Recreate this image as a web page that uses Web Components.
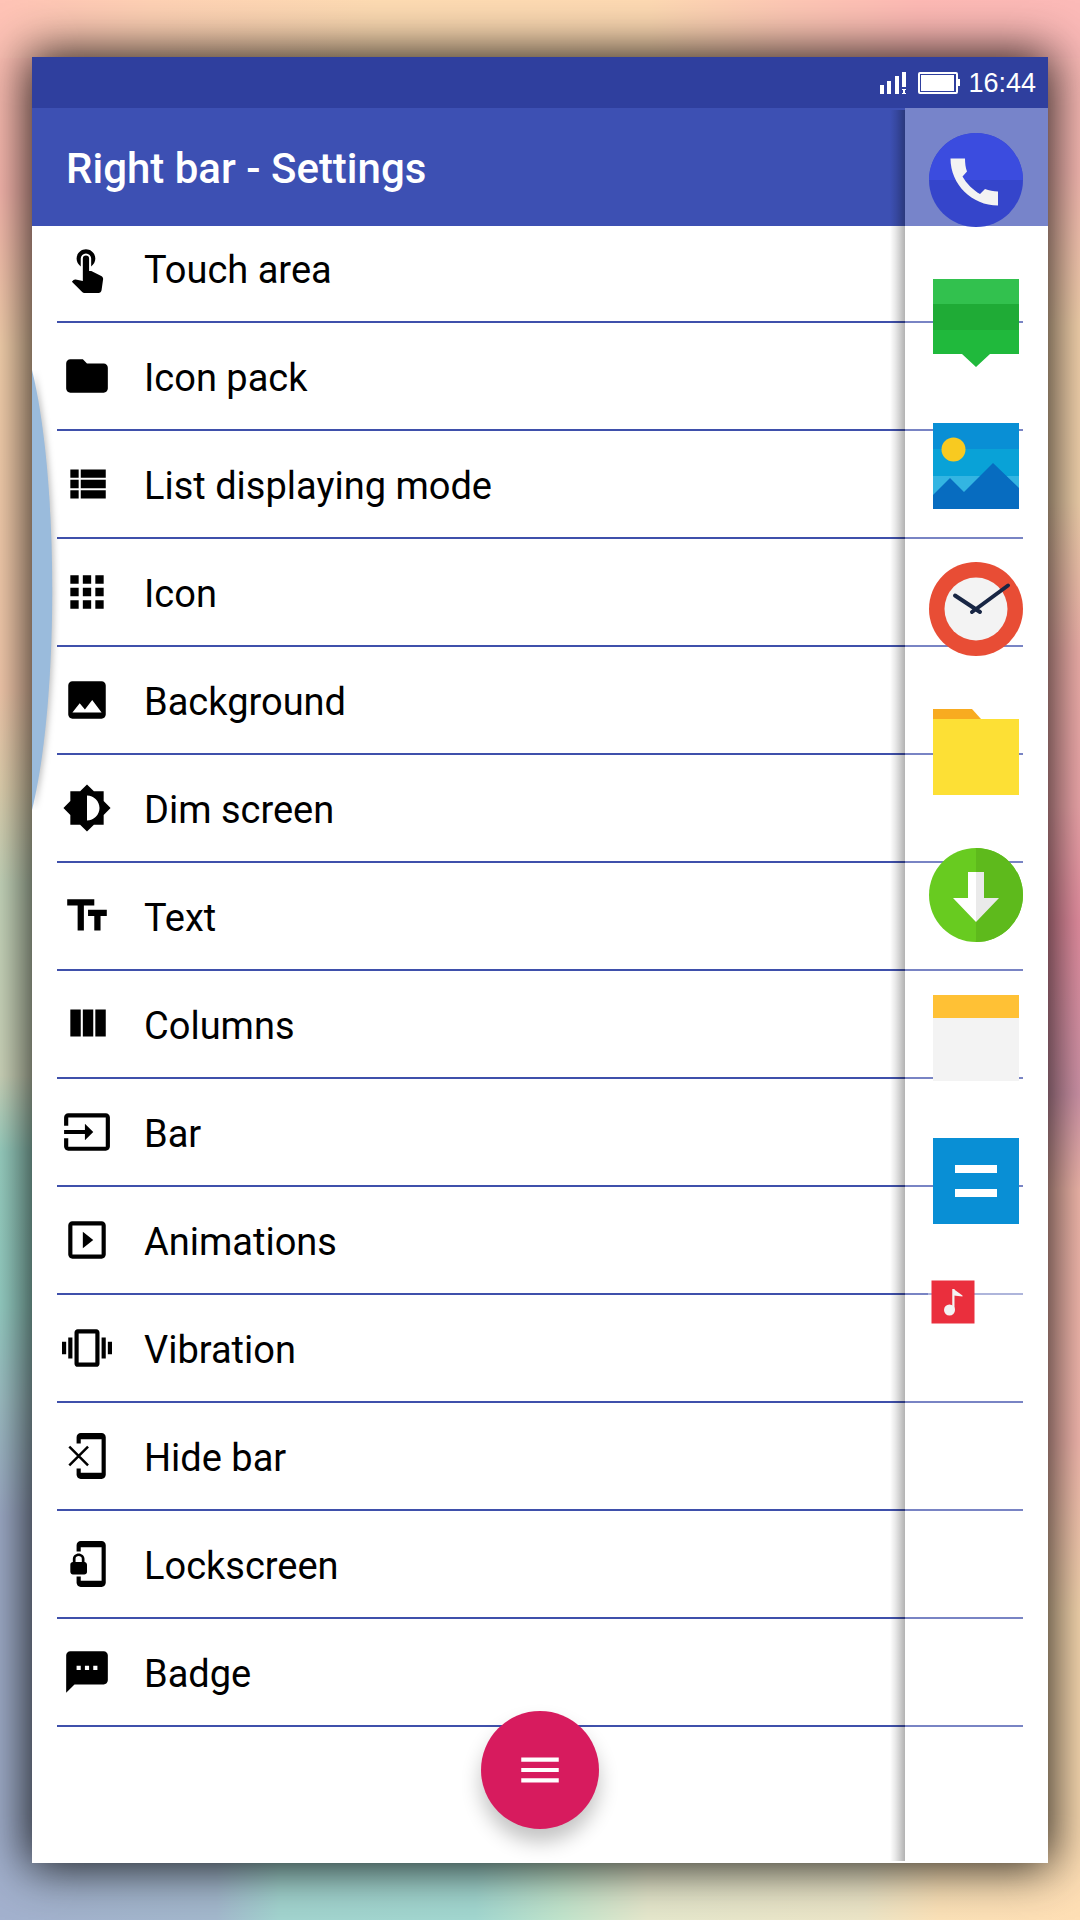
<!DOCTYPE html>
<html lang="en">
<head>
<meta charset="utf-8">
<title>Right bar - Settings</title>
<meta name="viewport" content="width=device-width, initial-scale=1">
<style>
  html, body { margin: 0; min-height: 100%; }
  body { font-family: Roboto, "Liberation Sans", sans-serif; color: #000; }
</style>
</head>
<body>
<app-backdrop>
  <app-screen>
    <status-bar slot="status">16:44</status-bar>
    <title-bar slot="title">Right bar - Settings</title-bar>
    <settings-list slot="list">
      <settings-row icon="touch">Touch area</settings-row>
      <settings-row icon="folder">Icon pack</settings-row>
      <settings-row icon="list">List displaying mode</settings-row>
      <settings-row icon="grid">Icon</settings-row>
      <settings-row icon="image">Background</settings-row>
      <settings-row icon="dim">Dim screen</settings-row>
      <settings-row icon="text">Text</settings-row>
      <settings-row icon="columns">Columns</settings-row>
      <settings-row icon="input">Bar</settings-row>
      <settings-row icon="play">Animations</settings-row>
      <settings-row icon="vibration">Vibration</settings-row>
      <settings-row icon="hide">Hide bar</settings-row>
      <settings-row icon="lock">Lockscreen</settings-row>
      <settings-row icon="badge">Badge</settings-row>
    </settings-list>
    <touch-handle slot="over"></touch-handle>
    <side-bar slot="over">
      <side-app app="phone" label="Phone"></side-app>
      <side-app app="messages" label="Messages"></side-app>
      <side-app app="gallery" label="Gallery"></side-app>
      <side-app app="clock" label="Clock"></side-app>
      <side-app app="files" label="Files"></side-app>
      <side-app app="downloads" label="Downloads"></side-app>
      <side-app app="notes" label="Notes"></side-app>
      <side-app app="calculator" label="Calculator"></side-app>
      <side-app app="music" label="Music" entering></side-app>
    </side-bar>
    <menu-fab slot="over"></menu-fab>
  </app-screen>
</app-backdrop>

<script>
const define = (name, html) => {
  customElements.define(name, class extends HTMLElement {
    constructor() {
      super();
      this.attachShadow({ mode: 'open' });
    }
    connectedCallback() {
      this.shadowRoot.innerHTML = typeof html === 'function' ? html(this) : html;
    }
  });
};

const glyphs = {
  touch: '<path d="M9 11.24V7.5a2.5 2.5 0 0 1 5 0v3.74c1.21-.81 2-2.18 2-3.74C16 5.01 13.99 3 11.5 3S7 5.01 7 7.5c0 1.56.79 2.93 2 3.74zm9.84 4.63-4.54-2.26c-.17-.07-.35-.11-.54-.11H13v-6a1.5 1.5 0 0 0-3 0v10.74l-3.43-.72c-.08-.01-.15-.03-.24-.03-.31 0-.59.13-.79.33l-.79.8 4.94 4.94c.27.27.65.44 1.06.44h6.79c.75 0 1.33-.55 1.44-1.28l.75-5.27c.01-.07.02-.14.02-.2 0-.62-.38-1.16-.91-1.38z"/>',
  folder: '<path d="M10 4H4c-1.1 0-2 .9-2 2v12c0 1.1.9 2 2 2h16c1.1 0 2-.9 2-2V8c0-1.1-.9-2-2-2h-8z"/>',
  list: '<path d="M4 14h4v-4H4zm0 5h4v-4H4zM4 9h4V5H4zm5 5h12v-4H9zm0 5h12v-4H9zM9 5v4h12V5z"/>',
  grid: '<path d="M4 8h4V4H4zm6 12h4v-4h-4zm-6 0h4v-4H4zm0-6h4v-4H4zm6 0h4v-4h-4zm6-10v4h4V4zm-6 4h4V4h-4zm6 6h4v-4h-4zm0 6h4v-4h-4z"/>',
  image: '<path d="M21 19V5c0-1.100-.9-2-2-2H5c-1.100 0-2 .9-2 2v14c0 1.100.9 2 2 2h14c1.100 0 2-.9 2-2zM8.500 13.500l2.500 3.010L14.500 12l4.500 6H5z"/>',
  dim: '<path d="M20 15.31 23.310 12 20 8.690V4h-4.690L12 .69 8.690 4H4v4.690L.69 12 4 15.310V20h4.690L12 23.310 15.310 20H20zM12 18V6c3.310 0 6 2.690 6 6s-2.690 6-6 6z"/>',
  text: '<path d="M2.500 4v3h5v12h3V7h5V4zm19 5h-9v3h3v7h3v-7h3z"/>',
  columns: '<path d="M10 18h5V5h-5zm-6 0h5V5H4zM16 5v13h5V5z"/>',
  input: '<path d="M21 3.010H3c-1.100 0-2 .9-2 2V9h2V4.990h18v14.030H3V15H1v4.010c0 1.100.9 1.980 2 1.980h18c1.100 0 2-.88 2-1.980v-14c0-1.110-.9-2-2-2zM11 16l4-4-4-4v3H1v2h10z"/>',
  play: '<path d="M10 8v8l5-4zm9-5H5c-1.100 0-2 .9-2 2v14c0 1.100.9 2 2 2h14c1.100 0 2-.9 2-2V5c0-1.100-.9-2-2-2zm0 16H5V5h14z"/>',
  vibration: '<path d="M0 15h2V9H0zm3 2h2V7H3zm19-8v6h2V9zm-3 8h2V7h-2zM16.500 3h-9C6.670 3 6 3.670 6 4.500v15c0 .83.67 1.500 1.500 1.500h9c.83 0 1.500-.67 1.500-1.500v-15c0-.83-.67-1.500-1.500-1.500zM16 19H8V5h8z"/>',
  hide: '<path d="M19 1H9C7.900 1 7 1.900 7 3v3h2V4h10v16H9v-2H7v3c0 1.100.9 2 2 2h10c1.100 0 2-.9 2-2V3c0-1.100-.9-2-2-2z"/><path d="M3.500 7.500l9 9m0-9l-9 9" fill="none" stroke="#000" stroke-width="1.200"/>',
  lock: '<path d="M19 1H9C7.900 1 7 1.900 7 3v3h2V4h10v16H9v-2H7v3c0 1.100.9 2 2 2h10c1.100 0 2-.9 2-2V3c0-1.100-.9-2-2-2zm-8.200 10V9.500C10.800 8.100 9.400 7 8 7S5.200 8.100 5.200 9.500V11c-.6 0-1.200.6-1.200 1.200v3.500c0 .7.6 1.300 1.200 1.300h5.500c.7 0 1.300-.6 1.300-1.200v-3.500c0-.7-.6-1.300-1.200-1.300zm-1.300 0h-3V9.500c0-.8.700-1.300 1.500-1.300s1.500.5 1.500 1.300z"/>',
  badge: '<path d="M20 2H4c-1.100 0-1.990.9-1.990 2L2 22l4-4h14c1.100 0 2-.9 2-2V4c0-1.100-.9-2-2-2zM9 11H7V9h2zm4 0h-2V9h2zm4 0h-2V9h2z"/>'
};

/* Launcher artwork, each on a 96 by 96 board */
const art = {
  phone: '<circle cx="48" cy="48" r="47" fill="#3545cb"/><path d="M1 48a47 47 0 0 1 94 0z" fill="#3b4cdf"/><path d="M22.500 26.500h14.500c0 4.500.5 9 2 13l-4.500 5c4 7 10.500 13.500 17.500 17.500l5-5c4 1.500 8.500 2.500 13 2.500v14c-26 0-47.500-21-47.500-47z" fill="#f3f3f3"/>',
  messages: '<path d="M5 4h86v26H5z" fill="#32c14e"/><path d="M5 29h86v27H5z" fill="#1fab36"/><path d="M5 55h86v24H62L48 92 34 79H5z" fill="#20b93c"/>',
  gallery: '<path d="M5 5h86v27H5z" fill="#098fd5"/><path d="M5 31h86v27H5z" fill="#09a2d7"/><path d="M5 58h86v20H5z" fill="#33b5e2"/><path d="M5 91V77l17-17 14 14 29-29 26 25v21z" fill="#076cc0"/><circle cx="25.500" cy="31.500" r="12" fill="#f8ca20"/>',
  clock: '<circle cx="48" cy="48" r="47" fill="#e84d35"/><circle cx="48" cy="48" r="31.500" fill="#f3f3f3"/><path d="M27 34.500 52 51M80 24.500 44 51" fill="none" stroke="#182644" stroke-width="4" stroke-linecap="round"/>',
  files: '<path d="M5 5h39l9 10v5H5z" fill="#f8ab20"/><path d="M5 15h86v76H5z" fill="#fde035"/>',
  downloads: '<circle cx="48" cy="48" r="47" fill="#68cb20"/><path d="M48 1a47 47 0 0 1 0 94z" fill="#5eba1c"/><path d="M40 25h8v50L25 51h15z" fill="#fff"/><path d="M48 25h8v26h15L48 75z" fill="#eaeaea"/>',
  notes: '<path d="M5 5h86v24H5z" fill="#ffc135"/><path d="M5 28h86v63H5z" fill="#f3f3f3"/>',
  calculator: '<path d="M5 5h86v86H5z" fill="#098fd5"/><path d="M27 32h42v8H27zM27 56h42v8H27z" fill="#fff"/>',
  music: '<path d="M5 5h86v86H5z" fill="#ea2f3d"/><path d="M47 22h2l18 13v2l-18-2v30h-2z" fill="#f3f3f3"/><path d="M47 22h4v42h-4z" fill="#f3f3f3"/><circle cx="41" cy="64" r="11" fill="#f3f3f3"/>'
};

define('app-backdrop', `
  <style>
    :host {
      display: flex; box-sizing: border-box; min-height: 100vh; padding: 57px 32px;
      background:
        linear-gradient(90deg, #ffc3b6 0, #ffd2b5 14%, #fedcb3 35%, #fedab3 60%, #fec8b5 73%, #febab5 85%, #fcbab8) top / 100% 58px no-repeat,
        linear-gradient(90deg, #a3b1ce 0, #a4b9ce 20%, #a3d5d0 26%, #a3d8d1 44%, #c2e5cd 52%, #e6e8cd 60%, #ede6c8 80%, #fce2b8 87%, #ffdfb5) bottom / 100% 58px no-repeat,
        linear-gradient(#ffc3b6 0, #ffbdb3 10%, #ffdab4 18%, #ffd3b4 36%, #ecdcb8 41%, #cfe0c4 46%, #d8e0c4 56%, #a0dacb 60%, #9dd9ce 68%, #a6c8ce 73%, #a3b1ce 79%) left / 50% 100% no-repeat,
        linear-gradient(#fcbab8 0, #ffbfb8 9%, #ffdcb4 17%, #fddcb4 26%, #fbb8b2 34%, #f9aeb2 42%, #f095a8 48%, #d99bb0 57%, #fdc0b3 62%, #ffc0b6 75%, #ffdfb5 84%) right / 50% 100% no-repeat;
    }
  </style>
  <slot></slot>`);

define('app-screen', `
  <style>
    :host {
      display: flex; flex-direction: column; flex: 1; min-width: 0; position: relative;
      background: #fff; box-shadow: 0 0 46px 4px rgba(0,0,0,.88);
    }
    main { flex: 1; }
  </style>
  <slot name="status"></slot>
  <slot name="title"></slot>
  <main><slot name="list"></slot></main>
  <slot name="over"></slot>`);

define('status-bar', `
  <style>
    :host {
      display: flex; align-items: center; justify-content: flex-end; gap: 8px;
      height: 51px; padding-right: 12px; background: #2f3f9e; color: #fff;
      font-family: "Liberation Sans", sans-serif; font-size: 27px; line-height: 32px;
    }
    svg { display: block; }
    .cell { margin-right: 4px; }
  </style>
  <svg class="cell" width="26" height="22" viewBox="0 0 26 22" fill="#fff" aria-hidden="true">
    <path d="M0 13h4v9H0zM7 9h4v13H7zM15 4h4v18h-4zM22 0h4v15h-4zM22 17h4v1h-1v3h1v1h-4v-1h1v-3h-1z"/>
  </svg>
  <svg width="42" height="22" viewBox="0 0 42 22" aria-hidden="true">
    <rect x="1" y="1" width="38" height="20" rx="1" fill="none" stroke="#fff" stroke-width="2"/>
    <path d="M3 3h33v16H3zM40 7h2v7h-2z" fill="#fff"/>
  </svg>
  <time><slot></slot></time>`);

define('title-bar', `
  <style>
    :host { display: flex; align-items: center; height: 118px; padding: 0 34px; background: #3d50b3; color: #fff; }
    h1 { margin: 0; padding-top: 4px; font-size: 42px; line-height: 48px; font-weight: 500; }
  </style>
  <h1><slot></slot></h1>`);

define('settings-list', `
  <style>
    :host { display: flex; flex-direction: column; padding: 0 25px; }
    ::slotted(:first-child) { height: 97px; }
  </style>
  <slot></slot>`);

define('settings-row', el => `
  <style>
    :host {
      display: flex; align-items: flex-end; box-sizing: border-box; height: 108px;
      border-bottom: 2px solid #3f50ab;
    }
    button {
      all: unset; box-sizing: border-box; flex: 1; display: flex; align-items: center; gap: 32px;
      height: 106px; padding-left: 5px; font-size: 38px; line-height: 46px; cursor: pointer;
    }
    svg { display: block; width: 50px; height: 50px; }
    span { padding-top: 4px; }
  </style>
  <button type="button">
    <svg viewBox="0 0 24 24" aria-hidden="true">${glyphs[el.getAttribute('icon')]}</svg>
    <span><slot></slot></span>
  </button>`);

define('touch-handle', `
  <style>
    :host { position: absolute; left: 0; top: 313px; width: 28px; height: 440px; overflow: hidden; }
    svg { display: block; filter: drop-shadow(2px 1px 3px rgba(0,0,0,.25)); }
  </style>
  <svg width="28" height="440" viewBox="0 0 28 440" aria-hidden="true">
    <path d="M0 0C27 110 27 330 0 440z" fill="#9abbdc"/>
  </svg>`);

define('side-bar', `
  <style>
    :host { position: absolute; right: 0; top: 51px; bottom: 0; width: 143px; background: rgba(255,255,255,.3); }
    :host::before {
      content: ""; position: absolute; right: 100%; top: 2px; bottom: 2px; width: 15px;
      background: linear-gradient(to left, rgba(0,0,0,.3), rgba(0,0,0,.1) 60%, rgba(0,0,0,0));
    }
    nav { display: flex; flex-direction: column; }
  </style>
  <nav aria-label="Apps"><slot></slot></nav>`);

define('side-app', el => `
  <style>
    :host { display: block; }
    button {
      all: unset; box-sizing: border-box; width: 100%; height: 143px; padding-left: 23px;
      display: flex; align-items: center; cursor: pointer;
    }
    svg { display: block; width: 96px; height: 96px; }
    :host([entering]) { padding-left: 23px; }
    :host([entering]) button { align-items: flex-start; padding: 26px 0 0 1px; background: rgba(255,255,255,.4); }
    :host([entering]) svg { width: 48px; height: 48px; }
  </style>
  <button type="button" aria-label="${el.getAttribute('label')}">
    <svg viewBox="0 0 96 96" aria-hidden="true">${art[el.getAttribute('app')]}</svg>
  </button>`);

define('menu-fab', `
  <style>
    :host { position: absolute; left: 0; right: 0; bottom: 34px; display: flex; justify-content: center; pointer-events: none; }
    button {
      all: unset; width: 118px; height: 118px; border-radius: 50%; background: #d71b5e; pointer-events: auto;
      display: flex; align-items: center; justify-content: center; cursor: pointer;
      box-shadow: 0 13px 20px rgba(0,0,0,.24);
    }
    svg { display: block; width: 50px; height: 50px; }
  </style>
  <button type="button" aria-label="Menu">
    <svg viewBox="0 0 24 24" fill="#fff" aria-hidden="true"><path d="M3 18h18v-2H3zm0-5h18v-2H3zm0-7v2h18V6z"/></svg>
  </button>`);
</script>
</body>
</html>
